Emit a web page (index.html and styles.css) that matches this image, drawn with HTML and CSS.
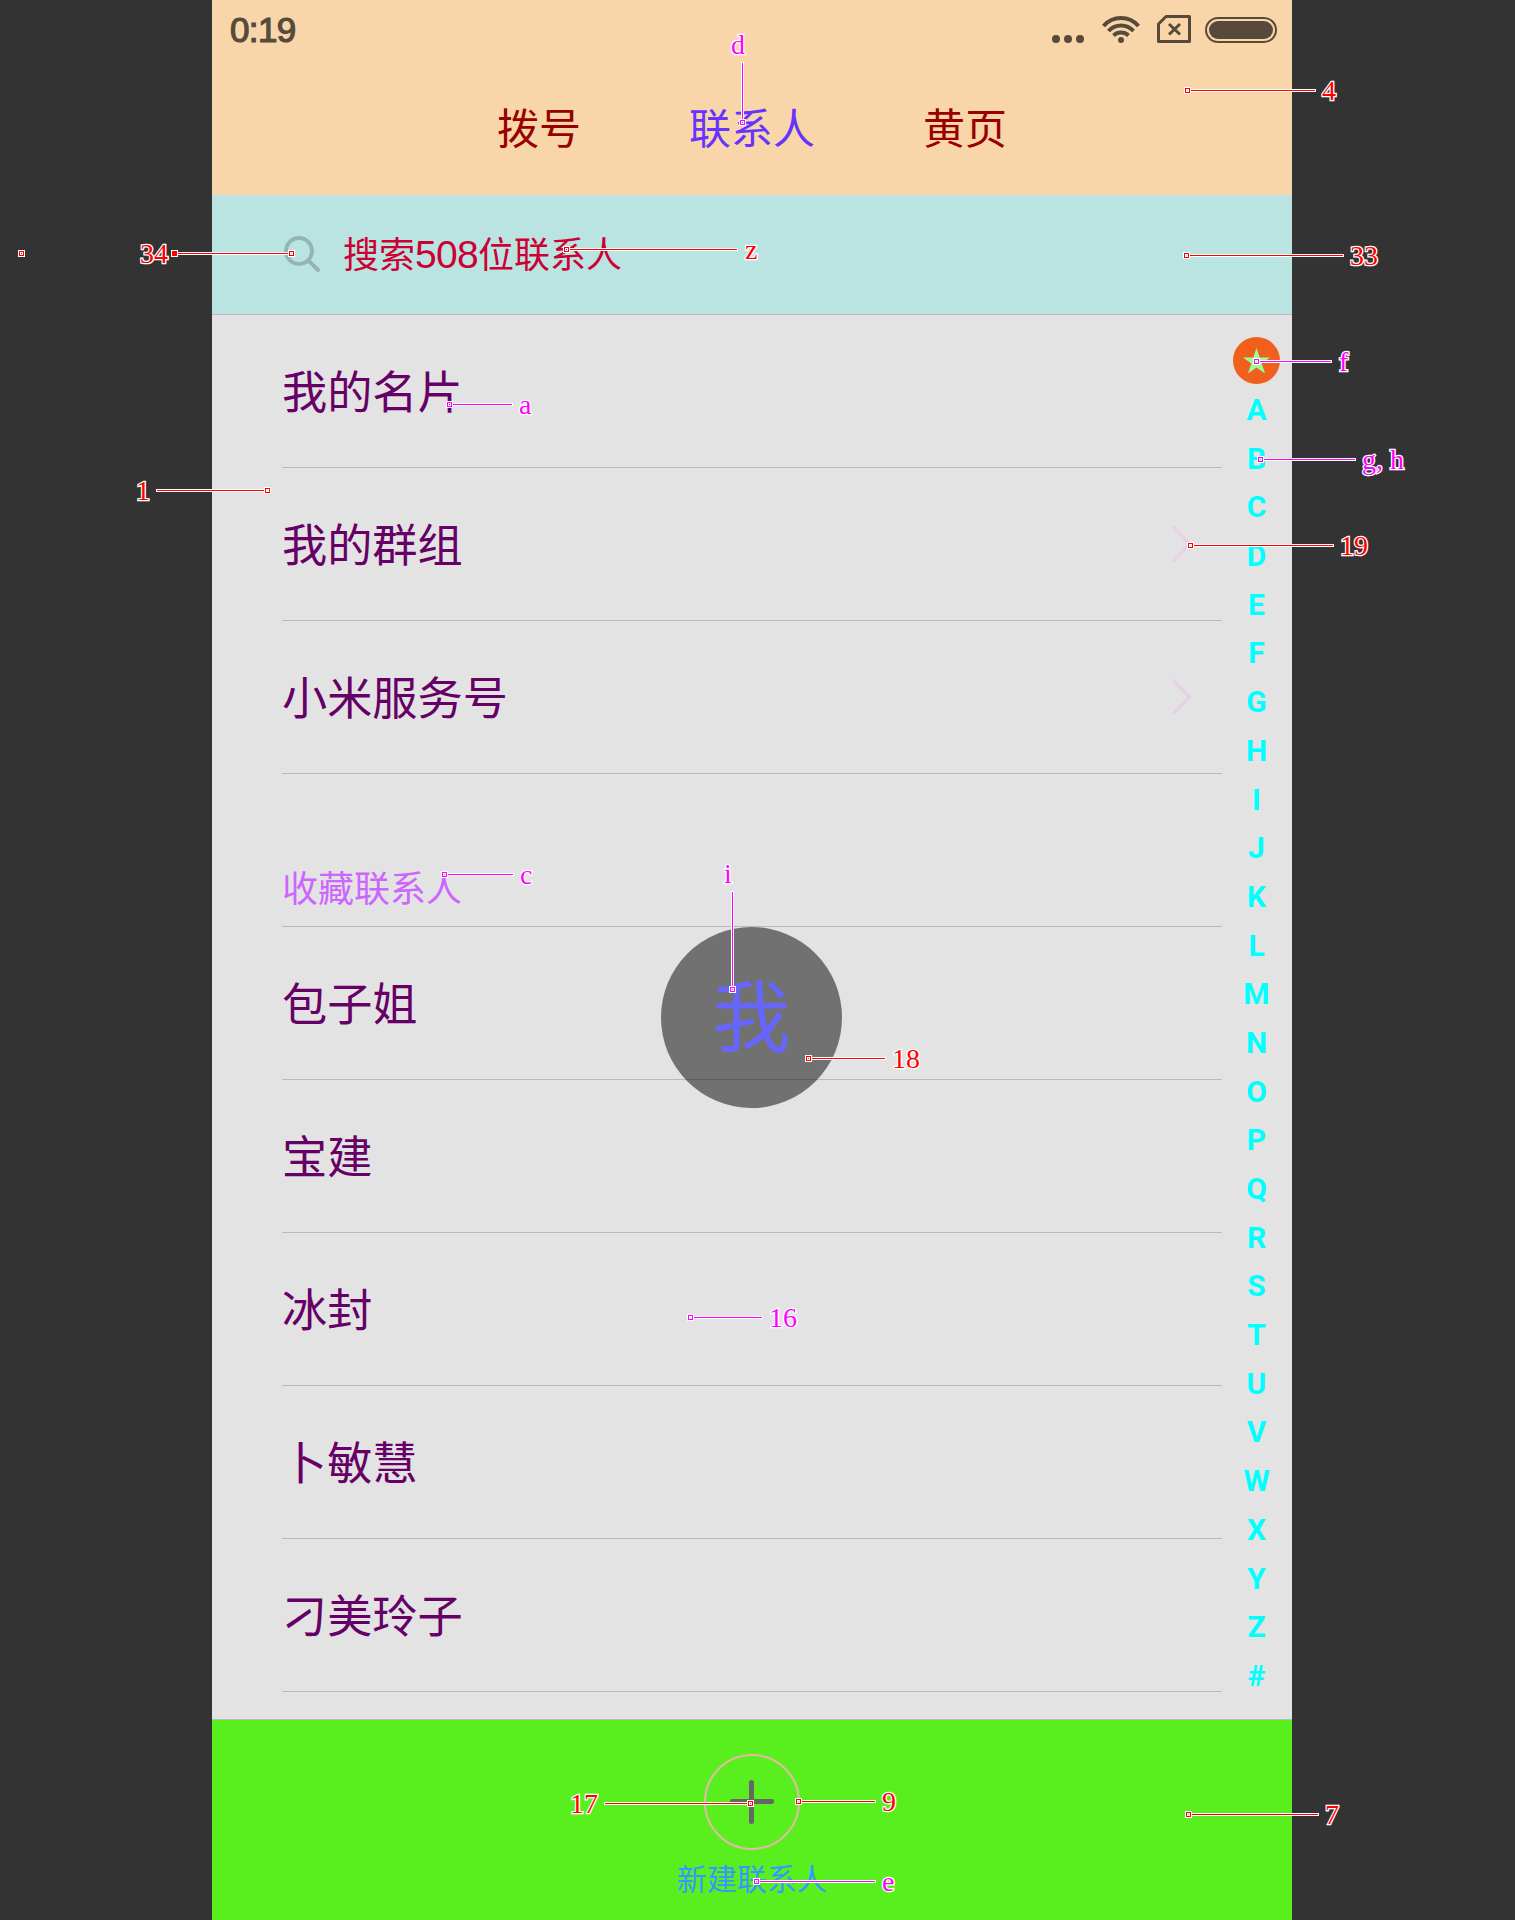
FILE: index.html
```html
<!DOCTYPE html>
<html lang="zh-CN">
<head>
<meta charset="utf-8">
<title>联系人</title>
<link rel="stylesheet" href="styles.css">
</head>
<body>
<main class="phone">
  <header class="header">
    <div class="status">
      <span class="time">0:19</span>
      <div class="status-icons">
        <svg class="dots" width="32" height="28"><circle cx="4" cy="24" r="4"/><circle cx="16" cy="24" r="4"/><circle cx="28" cy="24" r="4"/></svg>
        <svg class="wifi" width="38" height="28"><circle cx="19" cy="25" r="3"/><path d="M1.500 11A23.100 23.100 0 0 1 36.500 11M6.500 16A17 17 0 0 1 31.500 16M11.500 20.500A11 11 0 0 1 26.500 20.500"/></svg>
        <svg class="sim" width="34" height="28"><path d="M9 1.500H32.500V26.500H1.500V9Z"/><path class="cross" d="M12 9L23 19.500M23 9L12 19.500"/></svg>
        <svg class="battery" width="72" height="26"><rect class="shell" x="1" y="1" width="70" height="24" rx="12"/><rect x="4" y="4" width="64" height="18" rx="9"/></svg>
      </div>
    </div>
    <nav class="tabs"><a>拨号</a><a class="active">联系人</a><a>黄页</a></nav>
  </header>
  <div class="search">
    <svg width="38" height="38"><circle cx="17" cy="16" r="13"/><path d="M26.500 25.500L36 35"/></svg>
    <span class="search-text">搜索<span class="count">508</span>位联系人</span>
  </div>
  <div class="content">
    <ul class="list">
      <li>我的名片</li>
      <li>我的群组<svg class="chevron" width="20" height="38"><path d="M1.500 1.500L18.500 19L1.500 36.500"/></svg></li>
      <li>小米服务号<svg class="chevron" width="20" height="38"><path d="M1.500 1.500L18.500 19L1.500 36.500"/></svg></li>
      <li class="section">收藏联系人</li>
      <li>包子姐</li>
      <li>宝建</li>
      <li>冰封</li>
      <li>卜敏慧</li>
      <li>刁美玲子</li>
    </ul>
    <div class="index">
      <svg class="star" width="47" height="47"><circle cx="23.500" cy="23.500" r="23.500"/><path d="M23.500 11L26.700 20.500L37 20.500L28.700 26.500L32 36.500L23.500 30.500L15 36.500L18.300 26.500L10 20.500L20.300 20.500Z"/></svg>
      <span>A</span><span>B</span><span>C</span><span>D</span><span>E</span><span>F</span><span>G</span><span>H</span><span>I</span><span>J</span><span>K</span><span>L</span><span>M</span><span>N</span><span>O</span><span>P</span><span>Q</span><span>R</span><span>S</span><span>T</span><span>U</span><span>V</span><span>W</span><span>X</span><span>Y</span><span>Z</span><span>#</span>
    </div>
  </div>
  <footer class="footer">
    <svg class="add" width="96" height="96"><circle cx="48" cy="48" r="47"/><path d="M28.500 47.500H67.500M47.500 28.500V67.500"/></svg>
    <span>新建联系人</span>
  </footer>
  <div class="bubble">我</div>
</main>

<svg class="notes" width="1515" height="1920">
  <defs>
    <g id="pin"><rect x="-3" y="-3" width="6" height="6" stroke="#fff"/><rect x="-2" y="-2" width="4" height="4" stroke="currentColor"/><rect x="-1" y="-1" width="2" height="2" stroke="#fff"/></g>
  </defs>
  <g class="red">
    <path class="halo" d="M174 253.500H289M1190 90.500H1316M569 249.500H738M1189 255.500H1344M1193 545.500H1334M156 490.500H265M811 1058.500H886M604 1803.500H748M801 1801.500H876M1191 1814.500H1319"/>
    <path class="lead" d="M174 253.500H289M1190 90.500H1315M569 249.500H737M1189 255.500H1343M1193 545.500H1333M157 490.500H265M811 1058.500H885M605 1803.500H748M801 1801.500H875M1191 1814.500H1318"/>
    <rect class="dot" x="171.500" y="250.500" width="6" height="6"/>
    <use href="#pin" x="21.500" y="253.500"/><use href="#pin" x="291.500" y="253.500"/><use href="#pin" x="1187.500" y="90.500"/><use href="#pin" x="566.500" y="249.500"/><use href="#pin" x="1186.500" y="255.500"/><use href="#pin" x="1190.500" y="545.500"/><use href="#pin" x="267.500" y="490.500"/><use href="#pin" x="808.500" y="1058.500"/><use href="#pin" x="750.500" y="1803.500"/><use href="#pin" x="798.500" y="1801.500"/><use href="#pin" x="1188.500" y="1814.500"/>
    <text x="140" y="263">34</text><text x="1322" y="100">4</text><text x="745" y="259">z</text><text x="1350" y="265">33</text><text x="1340" y="555">19</text><text x="136" y="500">1</text><text x="892" y="1068">18</text><text x="570" y="1813">17</text><text x="882" y="1811">9</text><text x="1325" y="1824">7</text>
  </g>
  <g class="magenta">
    <path class="halo" d="M742.500 62V120M1259 361.500H1332M1263 459.500H1356M452 404.500H513M447 874.500H514M732.500 891V987M693 1317.500H763M759 1881.500H876"/>
    <path class="lead" d="M742.500 63V120M1259 361.500H1331M1263 459.500H1355M452 404.500H512M447 874.500H513M732.500 892V987M693 1317.500H762M759 1881.500H875"/>
    <use href="#pin" x="742.500" y="122.500"/><use href="#pin" x="1256.500" y="361.500"/><use href="#pin" x="1260.500" y="459.500"/><use href="#pin" x="449.500" y="404.500"/><use href="#pin" x="444.500" y="874.500"/><use href="#pin" x="732.500" y="989.500"/><use href="#pin" x="690.500" y="1317.500"/><use href="#pin" x="756.500" y="1881.500"/>
    <text x="731" y="54">d</text><text x="1339" y="371">f</text><text x="1362" y="469">g, h</text><text x="519" y="414">a</text><text x="520" y="884">c</text><text x="724" y="883">i</text><text x="769" y="1327">16</text><text x="882" y="1891">e</text>
  </g>
</svg>
</body>
</html>
```
FILE: styles.css
```css
* { box-sizing: border-box; }
body { margin: 0; height: 1920px; background: #333; position: relative; overflow: hidden; font-family: "Noto Sans CJK SC", sans-serif; }
svg { display: block; flex: none; }
.phone { width: 1080px; height: 1920px; margin-left: 212px; display: flex; flex-direction: column; position: relative; background: #e3e3e3; }

.header { height: 195px; background: #f8d6a9; display: flex; flex-direction: column; }
.status { height: 60px; padding: 0 15px 0 18px; display: flex; justify-content: space-between; align-items: center; color: #574a3a; }
.time { font: 35px/60px "Liberation Sans", sans-serif; letter-spacing: -0.6px; -webkit-text-stroke: 1.2px #574a3a; }
.status-icons { display: flex; align-items: flex-end; height: 28px; margin-top: -2px; fill: #574a3a; }
.dots { margin-right: 18px; }
.wifi { margin-right: 17px; }
.wifi path { fill: none; stroke: #574a3a; stroke-width: 4; }
.sim { margin-right: 14px; }
.sim path { fill: none; stroke: #574a3a; stroke-width: 3; stroke-linejoin: round; }
.shell { fill: none; stroke: #574a3a; stroke-width: 2; }
.tabs { display: flex; justify-content: center; gap: 108px; padding-top: 35px; font-size: 42px; line-height: 62px; color: #900; }
.tabs .active { color: #63f; }

.search { height: 120px; padding-left: 70px; background: #bae4e1; border-bottom: 1px solid #bababa; display: flex; align-items: center; gap: 23px; font-size: 36px; color: #c03; }
.search svg { fill: none; stroke: #95b5b2; stroke-width: 4; stroke-linecap: round; margin-top: -2px; }
.search-text { line-height: 52px; white-space: nowrap; padding-bottom: 5px; }
.count { font: 300 39px/1 "Liberation Sans", sans-serif; letter-spacing: -0.7px; }

.content { height: 1404px; padding-left: 70px; display: grid; grid-template-columns: 940px 70px; }
.list { list-style: none; margin: 0; padding: 0; }
.list li { height: 153px; display: flex; align-items: center; justify-content: space-between; padding: 0 31px 2px 0; border-bottom: 1px solid #bababa; font-size: 45.2px; line-height: 64px; color: #606; }
.list .section { padding-top: 74px; font-size: 36px; line-height: 52px; color: #c6f; }
.chevron { fill: none; stroke: #e8cfe8; stroke-width: 3; position: relative; top: 1px; }
.index { display: flex; flex-direction: column; align-items: center; padding: 22px 1px 0 0; font: bold 30px/48.69px Roboto, sans-serif; color: #0ff; }
.index span { height: 48.69px; }
.star { margin-bottom: 2px; }
.star circle { fill: #f0601c; }
.star path { fill: #9f9; }

.footer { height: 201px; border-top: 1px solid #bababa; background: #59ef1f; display: flex; flex-direction: column; align-items: center; padding-top: 34px; font-size: 30px; line-height: 44px; color: #39f; }
.footer span { margin-top: 5px; }
.add { fill: none; }
.add circle { stroke: #e5b8a8; stroke-width: 2; }
.add path { stroke: #666; stroke-width: 5; stroke-linecap: round; }

.bubble { position: absolute; left: 449px; top: 927px; width: 181px; height: 181px; border-radius: 50%; background: rgba(0, 0, 0, .5); color: #66f; font-size: 78px; line-height: 171px; text-align: center; }

.notes { position: absolute; left: 0; top: 0; fill: none; }
.red { color: #f00; }
.magenta { color: #f0f; }
.halo { stroke: #fff; stroke-width: 3; }
.lead { stroke: currentColor; }
.dot { fill: currentColor; stroke: #fff; }
.notes text { font: 28px "Liberation Serif", serif; fill: currentColor; stroke: #fff; stroke-width: 2.5px; paint-order: stroke; white-space: pre; }
```
